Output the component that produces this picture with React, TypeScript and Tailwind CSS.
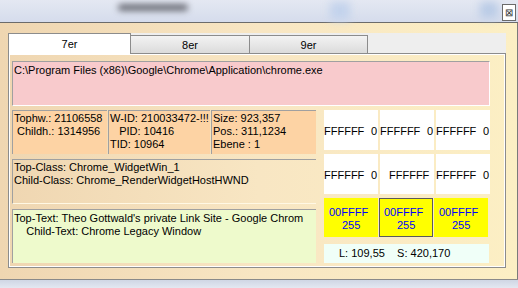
import React from "react";

const font = { fontFamily: '"Liberation Sans", Arial, sans-serif' };

const Cell = ({ left, right, center }: { left?: string; right?: string; center?: string }) => (
  <div className="flex h-[40px] w-[54px] items-center justify-between bg-white pt-[2px] text-[11px] leading-[13px] text-black">
    {center ? (
      <span className="w-full pl-[9px]">{center}</span>
    ) : (
      <>
        <span>{left}</span>
        <span className="pr-[1px]">{right}</span>
      </>
    )}
  </div>
);

const YellowCell = ({ active }: { active?: boolean }) => (
  <div
    className={`flex h-[39px] w-[54px] flex-col justify-center bg-[#ffff00] pt-[2px] text-[11px] leading-[13px] text-[#0000ff] ${
      active ? "border border-[#5a5a5a] pl-[4px]" : "pl-[5px]"
    }`}
  >
    <span>00FFFF</span>
    <span className="pl-[13px]">255</span>
  </div>
);

export default function App() {
  return (
    <div className="relative flex h-[288px] w-[518px] flex-col overflow-hidden bg-[#dfe4ef]" style={font}>
      {/* title bar */}
      <div className="relative h-[23px] shrink-0 border-b border-[#6b6b6b] bg-gradient-to-b from-[#e4e8f2] to-[#d5dcec]">
        <div className="absolute left-[118px] top-[4px] h-[7px] w-[70px] rounded-full bg-[#6d6f78] blur-[3px]" />
        <div className="absolute left-[330px] top-[2px] h-[18px] w-[20px] bg-[#c3d3ec] blur-[4px]" />
        <div className="absolute left-[480px] top-[2px] h-[16px] w-[18px] bg-[#b9cbe6] blur-[4px]" />
        <div className="absolute left-[502px] top-[4px] flex h-[17px] w-[14px] items-center justify-center border border-[#6a6a6a] bg-white text-[10px] leading-none text-[#333]">
          ⊠
        </div>
      </div>

      {/* client area */}
      <div className="flex h-[256px] shrink-0 border-r border-[#7a7a7a] bg-gradient-to-r from-[#efd6b1] via-[#f8e6c3] to-[#fcefc4] pl-[8px] pt-[10px] pr-[9px]">
        <div className="flex w-[498px] flex-col">
          {/* tab strip */}
          <div className="flex h-[21px] items-end bg-[#eeeeee]">
            <div className="z-10 flex h-[21px] w-[123px] items-center justify-center border border-b-0 border-[#8c8c8c] bg-white text-[11px] text-black">
              7er
            </div>
            <div className="flex h-[19px] w-[119px] items-center justify-center border border-l-0 border-b-0 border-[#8c8c8c] bg-gradient-to-b from-[#f3f3f3] to-[#dadada] pt-[1px] text-[11px] text-black">
              8er
            </div>
            <div className="flex h-[19px] w-[118px] items-center justify-center border border-l-0 border-b-0 border-[#8c8c8c] bg-gradient-to-b from-[#f3f3f3] to-[#dadada] pt-[1px] text-[11px] text-black">
              9er
            </div>
          </div>

          {/* panel */}
          <div className="-mt-[1px] h-[215px] border border-[#8c8c8c]">
            <div className="flex h-full flex-col border border-white px-[2px] pt-[6px] text-[11px] leading-[13px] text-black">
              <div className="h-[45px] w-[478px] border-l border-t border-[#a0a0a0] border-b border-r border-b-white border-r-white bg-[#f8cacc] pl-[1px] pt-[2px]">
                C:\Program Files (x86)\Google\Chrome\Application\chrome.exe
              </div>

              <div className="mt-[4px] flex gap-[8px]">
                {/* left column */}
                <div className="flex w-[304px] flex-col">
                  <div className="flex h-[44px] gap-[1px]">
                    <div className="w-[95px] border-l border-t border-[#a0a0a0] bg-[#fdd3a4] pl-[1px] pt-[1px] whitespace-pre">
                      {"Tophw.: 21106558\n Childh.: 1314956"}
                    </div>
                    <div className="w-[102px] border-l border-t border-[#a0a0a0] bg-[#fdd3a4] pl-[1px] pt-[1px] whitespace-pre">
                      {"W-ID: 210033472-!!!\n   PID: 10416\nTID: 10964"}
                    </div>
                    <div className="w-[105px] border-l border-t border-[#a0a0a0] bg-[#fdd3a4] pl-[1px] pt-[1px] whitespace-pre">
                      {"Size: 923,357\nPos.: 311,1234\nEbene : 1"}
                    </div>
                  </div>
                  <div className="mt-[5px] h-[45px] border-l border-t border-[#a0a0a0] border-b border-b-[#fff8e4] pl-[1px] pt-[1px] whitespace-pre">
                    {"Top-Class: Chrome_WidgetWin_1\nChild-Class: Chrome_RenderWidgetHostHWND"}
                  </div>
                  <div className="mt-[5px] h-[54px] border-l border-t border-[#a0a0a0] bg-[#eefacc] pl-[1px] pt-[2px] whitespace-pre">
                    {"Top-Text: Theo Gottwald's private Link Site - Google Chrom\n    Child-Text: Chrome Legacy Window"}
                  </div>
                </div>

                {/* right grid */}
                <div className="flex flex-col">
                  <div className="flex gap-[2px]">
                    <Cell left="FFFFFF" right="0" />
                    <Cell left="FFFFFF" right="0" />
                    <Cell left="FFFFFF" right="0" />
                  </div>
                  <div className="mt-[4px] flex gap-[2px]">
                    <Cell left="FFFFFF" right="0" />
                    <Cell center="FFFFFF" />
                    <Cell left="FFFFFF" right="0" />
                  </div>
                  <div className="mt-[4px] flex gap-[1px]">
                    <YellowCell />
                    <YellowCell active />
                    <YellowCell />
                  </div>
                  <div className="mt-[7px] flex h-[19px] w-[165px] items-center bg-[#f0fff8] pl-[15px] whitespace-pre">
                    {"L: 109,55    S: 420,170"}
                  </div>
                </div>
              </div>
            </div>
          </div>
        </div>
      </div>

      {/* bottom frame */}
      <div className="h-[9px] shrink-0 border-t border-[#8a8a8a] bg-gradient-to-b from-[#cfd6e4] to-[#e3e8f1]" />
    </div>
  );
}
